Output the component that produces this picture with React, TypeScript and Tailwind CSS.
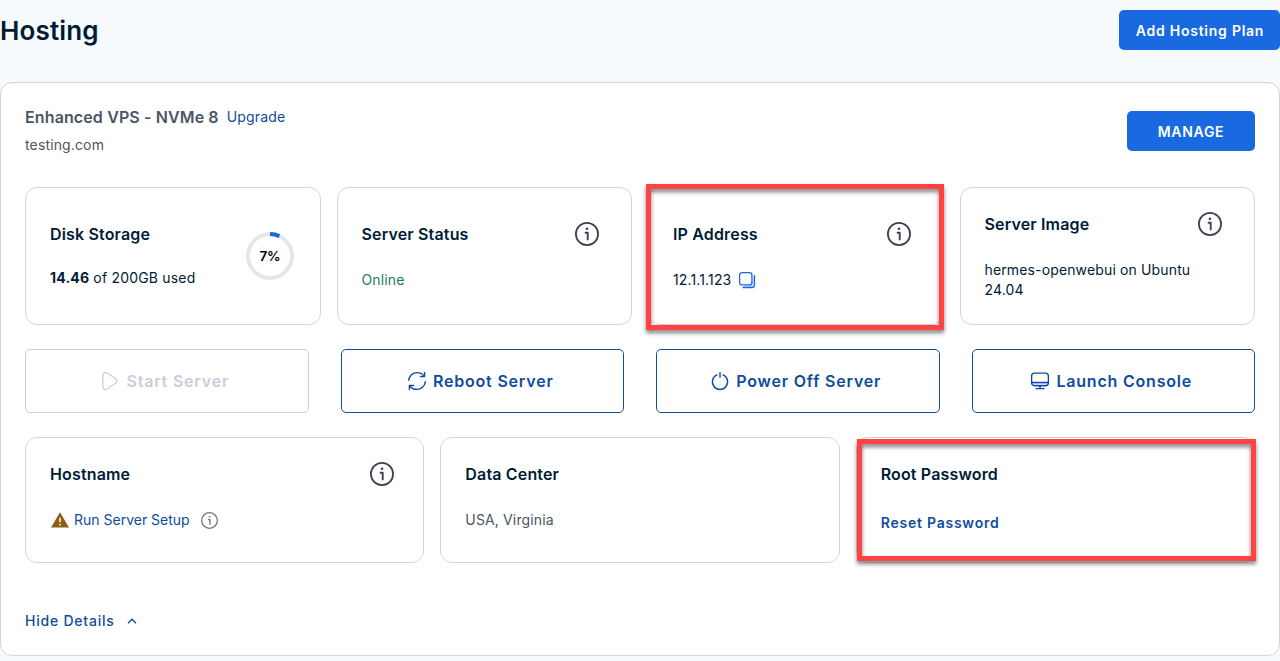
import type { ReactNode } from "react";
import clsx from "clsx";

interface CardProps {
  title: string;
  info?: boolean;
  centered?: boolean;
  highlight?: ReactNode;
  children: ReactNode;
}

function InfoIcon({ className }: { className?: string }) {
  return (
    <svg viewBox="0 0 24 24" fill="none" stroke="currentColor" className={className}>
      <circle cx="12" cy="12" r="11.1" strokeWidth="1.8" />
      <path d="M10.6 10.8h2.1v6.6" strokeWidth="1.9" strokeLinecap="round" strokeLinejoin="round" />
      <circle cx="12" cy="6.8" r="1.3" fill="currentColor" stroke="none" />
    </svg>
  );
}

function PlayIcon() {
  return (
    <svg viewBox="0 0 20 20" fill="none" stroke="currentColor" strokeWidth="1.3" className="h-5 w-5">
      <path
        d="M2.9 4.2c0-2.2 2.1-3.3 4-2.2l8.6 5.500c1.900 1.300 1.900 3.700 0 5l-8.600 5.500c-1.900 1.100-4 0-4-2.200z"
        strokeLinejoin="round"
      />
    </svg>
  );
}

function RebootIcon() {
  return (
    <svg
      viewBox="0 0 20 20"
      fill="none"
      stroke="currentColor"
      strokeWidth="1.4"
      strokeLinecap="round"
      strokeLinejoin="round"
      className="h-5 w-5"
    >
      <path d="M1.7 9.2C2.2 4.7 5.8 1.6 10.2 1.6c3 0 5.5 1.3 7 3.6" />
      <path d="M17.6 1.5v4h-4.2" />
      <path d="M18.3 10.8c-.5 4.5-4.1 7.6-8.5 7.6-3 0-5.5-1.3-7-3.6" />
      <path d="M2.4 18.5v-4h4.2" />
    </svg>
  );
}

function PowerIcon() {
  return (
    <svg
      viewBox="0 0 20 20"
      fill="none"
      stroke="currentColor"
      strokeWidth="1.4"
      strokeLinecap="round"
      className="h-5 w-5"
    >
      <path d="M10 1.6v4.6" />
      <path d="M6.9 3.9a7.6 7.6 0 1 0 6.2 0" />
    </svg>
  );
}

function ConsoleIcon() {
  return (
    <svg
      viewBox="0 0 20 20"
      fill="none"
      stroke="currentColor"
      strokeWidth="1.4"
      strokeLinecap="round"
      className="h-5 w-5"
    >
      <path d="M1.6 11.5h16.8c0 2-1 3.200-3 3.200H4.600c-2 0-3-1.200-3-3.200z" fill="#cfdff2" stroke="none" />
      <rect x="1.6" y="2.1" width="16.8" height="12.6" rx="3" />
      <path d="M1.6 11.5h16.8M10 15v2.4M6 17.6h8" />
    </svg>
  );
}

function CopyIcon() {
  return (
    <svg
      viewBox="0 0 18 18"
      fill="none"
      stroke="#196ae1"
      strokeWidth="1.3"
      strokeLinecap="round"
      className="h-[18px] w-[18px]"
    >
      <path d="M16.5 4.5v9.5a2.5 2.5 0 0 1-2.5 2.5H5" fill="#c9defa" />
      <rect x="1.6" y="1.6" width="12.3" height="12.3" rx="2.5" fill="#fff" />
    </svg>
  );
}

function WarningIcon() {
  return (
    <svg viewBox="0 0 20 20" className="h-5 w-5">
      <path d="M10 2.3 19 17.5H1z" fill="#8c5e16" />
      <path d="M10 7.8v4.4M10 13.9v1.5" stroke="#fff" strokeWidth="1.5" />
    </svg>
  );
}

function UsageRing({ percent }: { percent: number }) {
  const radius = 22;
  const length = 2 * Math.PI * radius;

  return (
    <div className="relative flex h-12 w-12 items-center justify-center">
      <svg viewBox="0 0 48 48" fill="none" strokeWidth="4" className="absolute inset-0 -rotate-90">
        <circle cx="24" cy="24" r={radius} stroke="#e6e6e6" />
        <circle
          cx="24"
          cy="24"
          r={radius}
          stroke="#196ae1"
          strokeDasharray={`${(length * percent) / 100} ${length}`}
        />
      </svg>
      <span className="pt-px pl-px text-[13.5px] font-semibold tracking-[-0.2px] text-black">
        {percent}%
      </span>
    </div>
  );
}

function Card({ title, info, centered, highlight, children }: CardProps) {
  return (
    <div
      className={clsx(
        "relative flex flex-col rounded-xl border border-[#d0d4dd] p-6",
        centered && "justify-center"
      )}
    >
      <div className="flex h-6 items-center justify-between">
        <h3 className="text-base font-semibold tracking-[0.16px]">{title}</h3>
        {info && (
          <InfoIcon className={clsx("h-6 w-6 text-[#3e4152]", centered ? "mr-2" : "mr-[5px]")} />
        )}
      </div>
      <div className="mt-6 text-sm leading-5 tracking-[0.14px]">{children}</div>
      {highlight}
    </div>
  );
}

const actions = [
  { label: "Start Server", icon: <PlayIcon />, disabled: true },
  { label: "Reboot Server", icon: <RebootIcon /> },
  { label: "Power Off Server", icon: <PowerIcon /> },
  { label: "Launch Console", icon: <ConsoleIcon /> },
];

export default function App() {
  return (
    <div className="h-[661px] w-[1280px] overflow-hidden bg-[#f6fafd] font-['Inter',sans-serif] text-[#001b36]">
      {/* Page header */}
      <header className="flex h-[82px] items-start justify-between pt-2.5">
        <h1 className="text-[26px] leading-[42px] font-semibold tracking-[0.15px]">Hosting</h1>
        <button className="h-10 w-[161px] rounded-[5px] bg-[#196ae1] pt-px pl-px text-sm font-semibold tracking-[0.75px] text-white">
          Add Hosting Plan
        </button>
      </header>

      <main className="h-[574px] rounded-xl border border-[#d0d4dd] bg-white px-6">
        {/* Plan */}
        <div className="flex h-[104px] items-start justify-between">
          <div className="pt-[22px]">
            <div className="flex items-center gap-2">
              <h2 className="text-base leading-6 font-semibold tracking-[0.12px] text-[#4b5563]">
                Enhanced VPS - NVMe 8
              </h2>
              <a className="text-sm tracking-[0.16px] text-[#0f4c9c]">Upgrade</a>
            </div>
            <p className="mt-1.5 text-sm leading-5 tracking-[0.14px] text-[#4b5563]">testing.com</p>
          </div>
          <button className="mt-7 h-10 w-32 rounded-[5px] bg-[#196ae1] pt-px text-sm font-semibold tracking-[0.7px] text-white">
            MANAGE
          </button>
        </div>

        {/* Server info */}
        <div className="grid h-[138px] grid-cols-4 gap-4">
          <div className="flex items-center justify-between rounded-xl border border-[#d0d4dd] pr-[26px] pl-6">
            <div className="pb-0.5">
              <h3 className="text-base leading-6 font-semibold tracking-[0.16px]">Disk Storage</h3>
              <p className="mt-[22px] text-sm leading-5 tracking-[0.19px]">
                <b className="font-bold">14.46</b> of 200GB used
              </p>
            </div>
            <UsageRing percent={7} />
          </div>
          <Card title="Server Status" info centered>
            <span className="text-[#1a7f64]">Online</span>
          </Card>
          <Card
            title="IP Address"
            info
            centered
            highlight={
              <div className="absolute -top-1 -right-[1.5px] -bottom-1.5 -left-[3px] border-[5px] border-[#ff4242] drop-shadow-[0_3px_2px_rgba(0,0,0,0.5)]" />
            }
          >
            <span className="flex items-center gap-[7px]">
              <span>12.1.1.123</span>
              <CopyIcon />
            </span>
          </Card>
          <Card title="Server Image" info centered>
            hermes-openwebui on Ubuntu 24.04
          </Card>
        </div>

        {/* Server actions */}
        <div className="mt-6 grid h-16 grid-cols-4 gap-8">
          {actions.map(({ label, icon, disabled }) => (
            <button
              key={label}
              disabled={disabled}
              className={clsx(
                "flex items-center justify-center gap-1.5 rounded-[5px] border pr-1 text-base font-semibold tracking-[0.8px]",
                disabled ? "border-[#c8cfdb] text-[#c8cfdb]" : "border-[#0f4c9c] text-[#0f4c9c]"
              )}
            >
              {icon}
              {label}
            </button>
          ))}
        </div>

        {/* Host details */}
        <div className="mt-6 grid h-[126px] grid-cols-3 gap-4">
          <Card title="Hostname" info>
            <span className="flex items-center">
              <WarningIcon />
              <a className="ml-1 tracking-normal text-[#0f4c9c]">Run Server Setup</a>
              <InfoIcon className="ml-[11px] h-[17px] w-[17px] text-[#757575]" />
            </span>
          </Card>
          <Card title="Data Center">
            <span className="text-[#4b5563]">USA, Virginia</span>
          </Card>
          <Card
            title="Root Password"
            highlight={
              <div className="absolute top-px -right-0.5 bottom-px left-[0.3px] border-[5px] border-[#ff4242] drop-shadow-[0_3px_2px_rgba(0,0,0,0.5)]" />
            }
          >
            <a className="block pt-[3px] font-semibold tracking-[0.77px] text-[#0f4c9c]">
              Reset Password
            </a>
          </Card>
        </div>

        {/* Details toggle */}
        <button className="mt-12 flex h-5 items-center gap-3 text-sm font-medium tracking-[0.78px] text-[#0f4c9c]">
          Hide Details
          <svg viewBox="0 0 10 6" fill="none" stroke="currentColor" strokeWidth="1.4" className="h-1.5 w-2.5">
            <path d="M1 5.2 5 1.2l4 4" />
          </svg>
        </button>
      </main>
    </div>
  );
}
